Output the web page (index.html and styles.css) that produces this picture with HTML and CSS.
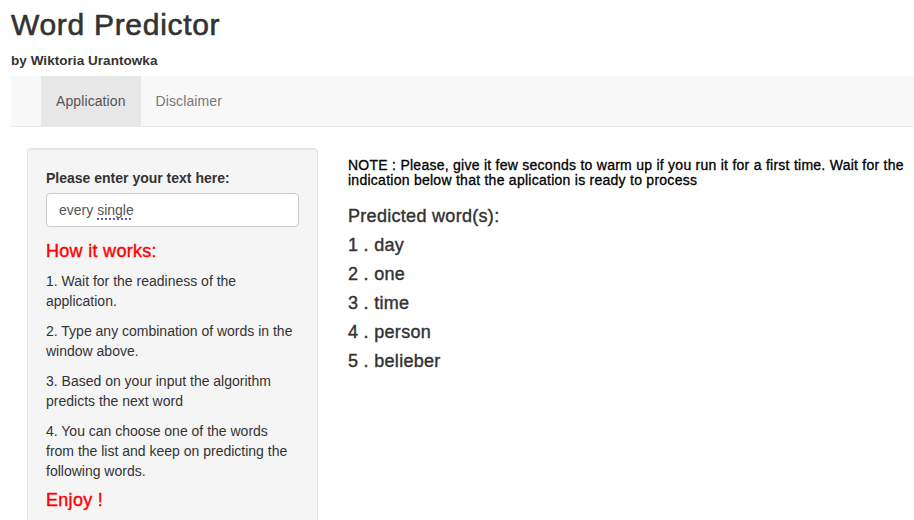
FILE: index.html
```html
<!DOCTYPE html>
<html lang="en">
<head>
<meta charset="utf-8">
<title>Word Predictor</title>
<link rel="stylesheet" href="styles.css">
</head>
<body>
<div class="page">
  <header class="title-panel">
    <h1 class="app-title">Word Predictor</h1>
    <h5 class="byline">by Wiktoria Urantowka</h5>
  </header>
  <nav class="navbar">
    <ul class="tabs">
      <li class="tab active">Application</li>
      <li class="tab">Disclaimer</li>
    </ul>
  </nav>
  <main class="content">
    <aside class="well">
      <div class="form-group">
        <label class="field-label">Please enter your text here:</label>
        <div class="text-input">every <span class="spell">single</span></div>
      </div>
      <h4 class="heading red">How it works:</h4>
      <p class="step">1. Wait for the readiness of the application.</p>
      <p class="step">2. Type any combination of words in the window above.</p>
      <p class="step">3. Based on your input the algorithm predicts the next word</p>
      <p class="step">4. You can choose one of the words from the list and keep on predicting the following words.</p>
      <h4 class="heading red">Enjoy !</h4>
    </aside>
    <section class="main-panel">
      <h5 class="note">NOTE : Please, give it few seconds to warm up if you run it for a first time. Wait for the indication below that the aplication is ready to process</h5>
      <h4 class="heading predicted-title">Predicted word(s):</h4>
      <h4 class="heading word">1 . day</h4>
      <h4 class="heading word">2 . one</h4>
      <h4 class="heading word">3 . time</h4>
      <h4 class="heading word">4 . person</h4>
      <h4 class="heading word">5 . belieber</h4>
    </section>
  </main>
</div>
</body>
</html>
```

FILE: styles.css
```css
html, body {
  margin: 0;
  padding: 0;
  background: #fff;
  overflow: hidden;
}

body {
  font-family: "Liberation Sans", Arial, Helvetica, sans-serif;
  font-size: 14px;
  line-height: 20px;
  color: #333;
}

.page {
  padding-left: 11px;
}

.title-panel {
  padding-top: 8px;
}

.app-title {
  margin: 0;
  font-size: 30px;
  line-height: 33px;
  font-weight: 400;
  letter-spacing: 0.7px;
  -webkit-text-stroke: 0.6px #333;
  color: #333;
}

.byline {
  margin: 12px 0 0;
  font-size: 13.5px;
  line-height: 15px;
  font-weight: 700;
  letter-spacing: 0.05px;
  color: #333;
}

.navbar {
  margin-top: 8px;
  background: #f8f8f8;
  border-bottom: 1px solid #e7e7e7;
  height: 50px;
}

.tabs {
  list-style: none;
  margin: 0;
  padding: 0 0 0 30px;
  display: flex;
}

.tab {
  padding: 15px 15px;
  line-height: 20px;
  letter-spacing: 0.1px;
  color: #777;
}

.tab.active {
  background: #e7e7e7;
  color: #555;
}

.content {
  display: flex;
  align-items: flex-start;
  padding-left: 16px;
  margin-top: 21px;
}

.well {
  flex: 0 0 auto;
  width: 253px;
  padding: 19px 18px 19px 18px;
  background: #f5f5f5;
  border: 1px solid #e3e3e3;
  border-radius: 4px;
  box-shadow: inset 0 1px 1px rgba(0, 0, 0, 0.05);
}

.form-group {
  margin-bottom: 15px;
}

.field-label {
  display: block;
  font-weight: 700;
  margin-bottom: 5px;
}

.text-input {
  height: 34px;
  box-sizing: border-box;
  padding: 6px 12px;
  border: 1px solid #ccc;
  border-radius: 4px;
  background: #fff;
  color: #555;
  line-height: 20px;
}

.spell {
  text-decoration: underline dotted #5656d8 2px;
  text-underline-offset: 3px;
}

.heading {
  margin: 10px 0;
  font-size: 18px;
  line-height: 19px;
  font-weight: 400;
  letter-spacing: 0.3px;
  -webkit-text-stroke: 0.4px currentColor;
}

.well .heading:first-of-type {
  margin-top: 0;
}

.red {
  color: #f00;
}

.step {
  margin: 0 0 10px;
}

.main-panel {
  margin-left: 30px;
  flex: 1 1 auto;
}

.note {
  margin: 10px 0 10px;
  font-size: 14px;
  line-height: 15px;
  font-weight: 400;
  letter-spacing: 0.26px;
  color: #000;
  -webkit-text-stroke: 0.3px #000;
}

.predicted-title {
  margin-top: 19px;
  color: #333;
}

.word {
  color: #333;
}
```
